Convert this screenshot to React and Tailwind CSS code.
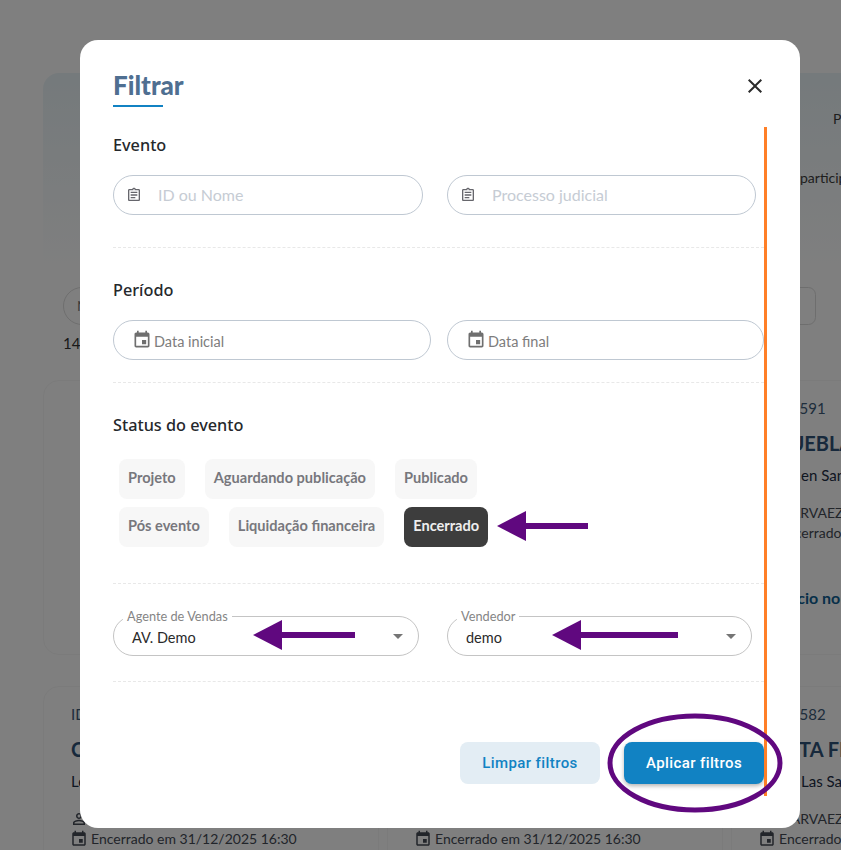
const FONT = "[font-family:Lato,'Noto_Sans',sans-serif]";

function CalendarIcon({ className }) {
  return (
    <svg viewBox="0 0 24 24" fill="currentColor" className={className}>
      <path d="M17 12h-5v5h5v-5zM16 1v2H8V1H6v2H5c-1.11 0-1.99.9-1.99 2L3 19c0 1.1.89 2 2 2h14c1.1 0 2-.9 2-2V5c0-1.1-.9-2-2-2h-1V1h-2zm3 18H5V8h14v11z" />
    </svg>
  );
}

function ClipboardIcon({ className }) {
  return (
    <svg viewBox="0 0 24 24" fill="currentColor" className={className}>
      <path d="M19 3h-4.18C14.4 1.84 13.3 1 12 1c-1.3 0-2.4.84-2.82 2H5c-1.1 0-2 .9-2 2v14c0 1.1.9 2 2 2h14c1.1 0 2-.9 2-2V5c0-1.1-.9-2-2-2zm-7 0c.55 0 1 .45 1 1s-.45 1-1 1-1-.45-1-1 .45-1 1-1zm7 16H5V5h14v14zM7 15h7v2H7zm0-4h10v2H7zm0-4h10v2H7z" />
    </svg>
  );
}

function PersonIcon({ className }) {
  return (
    <svg viewBox="0 0 24 24" fill="currentColor" className={className}>
      <path d="M12 6c1.1 0 2 .9 2 2s-.9 2-2 2-2-.9-2-2 .9-2 2-2m0 9c2.7 0 5.8 1.29 6 2v1H6v-.99c.2-.72 3.3-2.01 6-2.01M12 4C9.79 4 8 5.79 8 8s1.79 4 4 4 4-1.79 4-4-1.79-4-4-4zm0 9c-2.67 0-8 1.34-8 4v3h16v-3c0-2.66-5.33-4-8-4z" />
    </svg>
  );
}

function EventCard({ id, title, place, seller, link }) {
  return (
    <div className="h-[275px] rounded-2xl border border-[#f6f6f6] bg-white pl-[27px] pt-[17px] whitespace-nowrap overflow-hidden">
      {id && (
        <>
          <div className="text-[15px] leading-5 text-[#3c5a78]">ID: {id}</div>
          <div className="mt-[10px] text-xl font-bold leading-[30px] text-[#2f5378]">{title}</div>
          <div className="mt-[7px] text-[15px] leading-5 text-[#1c2c44]">{place}</div>
          <div className="mt-[18px] flex h-5 items-center gap-1 text-sm text-[#444a55]">
            <PersonIcon className="h-[18px] w-[18px] shrink-0 -ml-px" />
            {seller}
          </div>
          <div className="flex h-5 items-center gap-[3px] text-sm text-[#444a55]">
            <CalendarIcon className="h-[18px] w-[18px] shrink-0 -ml-px" />
            Encerrado em 31/12/2025 16:30
          </div>
          <div className="mt-[45px] text-base font-bold leading-5 text-[#0f5f93]">{link}</div>
        </>
      )}
    </div>
  );
}

function Page() {
  return (
    <div className="w-[1100px] pl-[43px] pt-[73px]">
      <div className="h-[200px] rounded-2xl bg-gradient-to-b from-[#eaf4f8] to-white pl-[790px] pt-[36px] text-sm whitespace-nowrap text-[#3d3d3d]">
        <div className="leading-5">Participantes</div>
        <div className="mt-[39px] -ml-[33px] leading-5">participantes</div>
      </div>
      <div className="ml-[20px] mt-[14px] flex h-[38px] w-[753px] items-center rounded-l-[20px] rounded-r-lg border border-[#dddddd] pl-[13px] text-sm text-[#777777]">
        Nome
      </div>
      <div className="ml-[20px] mt-[8px] text-[15px] leading-5 text-[#333333]">14 eventos</div>
      <div className="mt-[27px] grid grid-cols-[336px_336px_336px] gap-x-[8px] gap-y-[31px]">
        <EventCard />
        <EventCard id="12590" title="CASA" place="Leilão" seller="DIEGO" link="Anúncio no site" />
        <EventCard id="12591" title="A PUEBLA" place="Leilão en Santos" seller="NARVAEZ" link="Anúncio no site" />
        <EventCard id="12580" title="CASA" place="Leilão em Santos" seller="DIEGO" link="Anúncio no site" />
        <EventCard id="12581" title="CASA" place="Leilão" seller="DIEGO" link="Anúncio no site" />
        <EventCard id="12582" title="COSTA FINAL" place="Leilão Las Santos" seller="NARVAEZ" link="Anúncio no site" />
      </div>
    </div>
  );
}

function SearchField({ placeholder, width }) {
  return (
    <div className={`flex h-10 items-center rounded-[20px] border border-[#bfc8d2] pl-[12px] ${width}`}>
      <ClipboardIcon className="h-4 w-4 shrink-0 text-[#66666c]" />
      <input
        placeholder={placeholder}
        className="ml-[16px] w-full bg-transparent pb-px text-base outline-none placeholder:text-[#c6ccd4]"
      />
    </div>
  );
}

function DateField({ placeholder, width }) {
  return (
    <div className={`flex h-10 items-center rounded-[20px] border border-[#bfc8d2] pl-[18px] ${width}`}>
      <CalendarIcon className="h-5 w-5 shrink-0 text-[#6f6f6f]" />
      <input
        placeholder={placeholder}
        className="ml-[2px] w-full bg-transparent pt-[3px] text-[14.5px] outline-none placeholder:text-[#7d7d7d]"
      />
    </div>
  );
}

function SelectField({ label, value, width }) {
  return (
    <fieldset className={`relative h-[47px] rounded-[20px] border border-[#c4c4c4] pl-[18px] ${width}`}>
      <legend className="-ml-[9px] px-[4px] text-[12.75px] leading-[14px] text-[#858585]">{label}</legend>
      <div className="mt-[5px] text-[14.5px] leading-5 text-[#2a2a2a]">{value}</div>
      <span className="absolute right-[15px] top-[11px] h-0 w-0 border-x-[5px] border-t-[5px] border-x-transparent border-t-[#757575]" />
    </fieldset>
  );
}

function Chip({ label, active }) {
  return (
    <button
      className={`h-10 rounded-lg px-[9px] pb-[2px] text-[14.6px] font-bold ${
        active ? "bg-[#3d3d3d] text-[#eeeeee]" : "bg-[#f7f7f7] text-[#77777d]"
      }`}
    >
      {label}
    </button>
  );
}

function Divider({ className }) {
  return <div className={`border-t border-dashed border-[#e8e8e8] ${className}`} />;
}

function SectionTitle({ children, className }) {
  return (
    <h2 className={`text-[16.25px] font-medium leading-6 text-[#25282c] [font-family:'Noto_Sans',sans-serif] ${className}`}>
      {children}
    </h2>
  );
}

function Annotations() {
  const purple = "#60087f";
  return (
    <svg viewBox="0 0 841 850" className="pointer-events-none absolute left-0 top-0 h-[850px] w-[841px]">
      <rect x="764" y="127" width="3" height="669" fill="#ff7f27" />
      <rect x="526" y="523" width="62" height="6" fill={purple} />
      <polygon points="497,526 526,511 526,541" fill={purple} />
      <rect x="282" y="632" width="73" height="6" fill={purple} />
      <polygon points="253,635 282,620 282,650" fill={purple} />
      <rect x="581" y="632" width="97" height="6" fill={purple} />
      <polygon points="552,635 581,620 581,650" fill={purple} />
      <ellipse cx="695" cy="763" rx="85" ry="47" fill="none" stroke={purple} strokeWidth="5" />
    </svg>
  );
}

export default function App() {
  return (
    <div className={`relative h-[850px] w-[841px] overflow-hidden bg-white ${FONT}`}>
      <Page />
      <div className="absolute inset-0 bg-black/50" />

      <div className="absolute left-[80px] top-[40px] h-[788px] w-[720px] rounded-[18px] bg-white pl-[33px] pr-[36px] pt-[29px]">
        <div className="flex items-start justify-between">
          <div>
            <h1 className="text-[26px] font-black leading-8 text-[#4f6f91]">Filtrar</h1>
            <div className="mt-[4px] h-[2px] w-[50px] bg-[#1182c3]" />
          </div>
          <svg viewBox="0 0 24 24" fill="#2b2b2b" className="mr-[-3px] mt-[5px] h-6 w-6">
            <path d="M19 6.41 17.59 5 12 10.59 6.41 5 5 6.41 10.59 12 5 17.59 6.41 19 12 13.41 17.59 19 19 17.59 13.41 12z" />
          </svg>
        </div>

        <SectionTitle className="mt-[26px]">Evento</SectionTitle>
        <div className="mt-[18px] flex gap-[24px]">
          <SearchField placeholder="ID ou Nome" width="w-[310px]" />
          <SearchField placeholder="Processo judicial" width="w-[309px]" />
        </div>
        <Divider className="mt-[32px]" />

        <SectionTitle className="mt-[30px]">Período</SectionTitle>
        <div className="mt-[18px] flex gap-[16px]">
          <DateField placeholder="Data inicial" width="w-[318px]" />
          <DateField placeholder="Data final" width="w-[317px]" />
        </div>
        <Divider className="mt-[22px]" />

        <SectionTitle className="mt-[30px]">Status do evento</SectionTitle>
        <div className="ml-[6px] mt-[22px] flex flex-col gap-[8px]">
          <div className="flex gap-[20px]">
            <Chip label="Projeto" />
            <Chip label="Aguardando publicação" />
            <Chip label="Publicado" />
          </div>
          <div className="flex gap-[20px]">
            <Chip label="Pós evento" />
            <Chip label="Liquidação financeira" />
            <Chip label="Encerrado" active />
          </div>
        </div>
        <Divider className="mt-[36px]" />

        <div className="mt-[25px] flex gap-[28px]">
          <SelectField label="Agente de Vendas" value="AV. Demo" width="w-[306px]" />
          <SelectField label="Vendedor" value="demo" width="w-[305px]" />
        </div>
        <Divider className="mt-[25px]" />

        <div className="mt-[60px] flex justify-end gap-[24px] [font-family:Roboto,sans-serif]">
          <button className="h-[42px] w-[140px] rounded-lg bg-[#e3edf4] text-[15px] font-medium tracking-[0.4px] text-[#1182c3]">
            Limpar filtros
          </button>
          <button className="h-[42px] w-[140px] rounded-lg bg-[#1182c3] text-[15px] font-medium tracking-[0.4px] text-white shadow-[0_2px_4px_rgba(0,0,0,0.3)]">
            Aplicar filtros
          </button>
        </div>
      </div>

      <Annotations />
    </div>
  );
}
